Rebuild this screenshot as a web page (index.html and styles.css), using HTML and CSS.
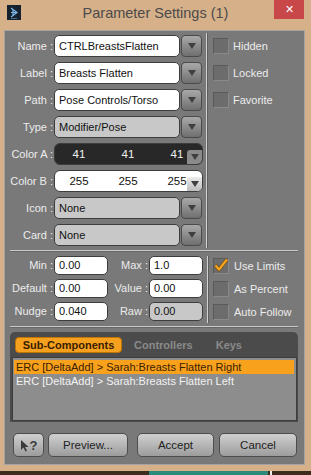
FILE: index.html
```html
<!DOCTYPE html>
<html>
<head>
<meta charset="utf-8">
<link rel="stylesheet" href="styles.css">
</head>
<body>
<div class="titlebar">
  <svg class="appicon" width="14" height="15" viewBox="0 0 14 15">
    <rect width="14" height="15" fill="#16212e"/>
    <path d="M4 3 L10 7.5 L4 12 M4 7.5 L10 7.5 M6 5 L6 10" stroke="#7fb8e8" stroke-width="1.2" fill="none"/>
    <rect x="4" y="13" width="6" height="1" fill="#4a6a8a"/>
  </svg>
  <div class="title">Parameter Settings (1)</div>
  <div class="close">✕</div>
</div>

<div class="dialog">
  <div class="top">
    <div class="form">
      <div class="row"><span class="lbl">Name :</span><div class="field">CTRLBreastsFlatten</div><div class="dd"><i></i></div></div>
      <div class="row"><span class="lbl">Label :</span><div class="field">Breasts Flatten</div><div class="dd"><i></i></div></div>
      <div class="row"><span class="lbl">Path :</span><div class="field">Pose Controls/Torso</div><div class="dd"><i></i></div></div>
      <div class="row"><span class="lbl">Type :</span><div class="field dis">Modifier/Pose</div><div class="dd"><i></i></div></div>
      <div class="row"><span class="lbl">Color A :</span><div class="color dark"><span>41</span><span>41</span><span>41</span><div class="cdd"><i></i></div></div></div>
      <div class="row"><span class="lbl">Color B :</span><div class="color light"><span>255</span><span>255</span><span>255</span><div class="cdd"><i></i></div></div></div>
      <div class="row"><span class="lbl">Icon :</span><div class="field dis">None</div><div class="dd"><i></i></div></div>
      <div class="row"><span class="lbl">Card :</span><div class="field dis">None</div><div class="dd"><i></i></div></div>
    </div>
    <div class="vsep"></div>
    <div class="checks">
      <div class="crow"><span class="cb"></span>Hidden</div>
      <div class="crow"><span class="cb"></span>Locked</div>
      <div class="crow"><span class="cb"></span>Favorite</div>
    </div>
  </div>
  <div class="hsep"></div>
  <div class="limits">
    <div class="lform">
      <div class="lrow"><span class="l1">Min :</span><div class="nf">0.00</div><span class="l2">Max :</span><div class="nf">1.0</div></div>
      <div class="lrow"><span class="l1">Default :</span><div class="nf">0.00</div><span class="l2">Value :</span><div class="nf">0.00</div></div>
      <div class="lrow"><span class="l1">Nudge :</span><div class="nf">0.040</div><span class="l2">Raw :</span><div class="nf dis">0.00</div></div>
    </div>
    <div class="vsep short"></div>
    <div class="lchecks">
      <div class="lcrow"><span class="cb checked"><svg width="16" height="16" viewBox="0 0 16 16"><path d="M2.5 8.5 L6 12.5 L14 2.5" stroke="#7a4a00" stroke-width="3.6" fill="none" stroke-linejoin="round"/><path d="M2.5 8.5 L6 12.5 L14 2.5" stroke="#f5a623" stroke-width="2.2" fill="none" stroke-linejoin="round"/></svg></span>Use Limits</div>
      <div class="lcrow"><span class="cb"></span>As Percent</div>
      <div class="lcrow"><span class="cb"></span>Auto Follow</div>
    </div>
  </div>
  <div class="hsep"></div>
  <div class="tabbox">
    <div class="tabs">
      <span class="tab active">Sub-Components</span>
      <span class="tab">Controllers</span>
      <span class="tab keys">Keys</span>
    </div>
    <div class="list">
      <div class="item sel">ERC [DeltaAdd] &gt; Sarah:Breasts Flatten Right</div>
      <div class="item">ERC [DeltaAdd] &gt; Sarah:Breasts Flatten Left</div>
    </div>
  </div>
  <div class="buttons">
    <div class="btn help"><svg width="10" height="13" viewBox="0 0 10 13"><path d="M1 1 L1 11 L3.5 8.5 L5.5 12.5 L7 11.8 L5 8 L8.5 8 Z" fill="#3a3a3a"/></svg><span>?</span></div>
    <div class="btn preview">Preview...</div>
    <div class="btn accept">Accept</div>
    <div class="btn cancel">Cancel</div>
  </div>
</div>
<div class="taskbar"><span class="teal"></span><span class="white"></span></div>
</body>
</html>
```

FILE: styles.css
```css
html, body {
  margin: 0;
  padding: 0;
}
body {
  width: 311px;
  height: 475px;
  overflow: hidden;
  background: #d6b089;
  font-family: "Liberation Sans", Arial, sans-serif;
  font-size: 11px;
  color: #111;
}
.titlebar {
  height: 30px;
  display: flex;
  align-items: flex-start;
  position: relative;
}
.appicon {
  margin: 5px 0 0 7px;
}
.title {
  position: absolute;
  left: 0;
  right: 0;
  top: 5px;
  text-align: center;
  font-size: 14.5px;
  color: #4b4b4b;
}
.close {
  position: absolute;
  left: 274px;
  top: 0;
  width: 30px;
  height: 19px;
  background: #c8484a;
  color: #fff;
  font-size: 11px;
  text-align: center;
  line-height: 19px;
}
.dialog {
  margin-left: 4px;
  width: 299px;
  height: 433px;
  background: #797979;
  border: 1px solid #a3a3a3;
  display: flex;
  flex-direction: column;
}
.top {
  display: flex;
  height: 219px;
  box-sizing: border-box;
  padding-top: 4px;
}
.form {
  display: flex;
  flex-direction: column;
  gap: 5px;
  width: 201px;
}
.row {
  display: flex;
  height: 22px;
  align-items: stretch;
}
.lbl {
  width: 48px;
  text-align: right;
  color: #ececec;
  line-height: 22px;
  white-space: nowrap;
  margin-right: 1px;
}
.field {
  background: #fff;
  border: 1px solid #3d3d3d;
  border-radius: 5px;
  padding-left: 4px;
  line-height: 20px;
  box-sizing: border-box;
  width: 126px;
  white-space: nowrap;
  overflow: hidden;
}
.field.dis, .nf.dis {
  background: #c8c8c8;
}
.dd {
  width: 21px;
  margin-left: 1px;
  box-sizing: border-box;
  border: 1px solid #4a4a4a;
  border-radius: 4px;
  background: linear-gradient(#a9a9a9, #6f6f6f);
  display: flex;
  align-items: center;
  justify-content: center;
}
.dd i, .cdd i {
  display: block;
  width: 0;
  height: 0;
  border-left: 4px solid transparent;
  border-right: 4px solid transparent;
  border-top: 6px solid #3f3f3f;
}
.color {
  position: relative;
  width: 149px;
  box-sizing: border-box;
  border: 1px solid #3d3d3d;
  border-radius: 6px;
  display: flex;
  align-items: center;
  line-height: 20px;
  font-size: 11.5px;
}
.color span {
  width: 50px;
  text-align: center;
  margin-left: -1px;
}
.color.dark {
  background: #282828;
  color: #f0f0f0;
}
.color.light {
  background: #fff;
  color: #111;
}
.cdd {
  position: absolute;
  right: 0;
  bottom: 0;
  width: 15px;
  height: 14px;
  display: flex;
  align-items: center;
  justify-content: center;
  border-radius: 3px 0 5px 0;
}
.dark .cdd {
  background: #8a8a8a;
}
.light .cdd {
  background: linear-gradient(#ececec, #bcbcbc);
}
.vsep {
  width: 1px;
  background: #d2d2d2;
  border-right: 1px solid #5e5e5e;
  margin: -2px 0 2px 0;
}
.checks {
  display: flex;
  flex-direction: column;
  gap: 5px;
  padding-left: 5px;
}
.crow, .lcrow {
  display: flex;
  align-items: center;
  height: 22px;
  color: #ececec;
  white-space: nowrap;
}
.cb {
  width: 16px;
  height: 16px;
  box-sizing: border-box;
  background: #6c6c6c;
  border: 1px solid #5a5a5a;
  border-right-color: #8a8a8a;
  border-bottom-color: #8a8a8a;
  margin-right: 4px;
  display: inline-block;
  position: relative;
}
.cb.checked svg {
  position: absolute;
  left: -1px;
  top: -2px;
}
.hsep {
  height: 1px;
  background: #c9c9c9;
  border-bottom: 1px solid #666;
  margin: 0 6px 0 5px;
}
.limits {
  display: flex;
  height: 74px;
  box-sizing: border-box;
  padding-top: 4px;
}
.lform {
  display: flex;
  flex-direction: column;
  gap: 4px;
  width: 202px;
}
.lrow {
  display: flex;
  height: 19px;
}
.l1 {
  width: 48px;
  text-align: right;
  color: #ececec;
  margin-right: 1px;
  line-height: 19px;
  white-space: nowrap;
}
.l2 {
  width: 40px;
  text-align: right;
  color: #ececec;
  margin-right: 1px;
  line-height: 19px;
  white-space: nowrap;
}
.nf {
  width: 54px;
  box-sizing: border-box;
  background: #fff;
  border: 1px solid #3d3d3d;
  border-radius: 5px;
  padding-left: 4px;
  line-height: 17px;
}
.vsep.short {
  margin: 0 0 3px 0;
}
.lchecks {
  display: flex;
  flex-direction: column;
  gap: 4px;
  padding-left: 4px;
}
.lcrow {
  height: 19px;
}
.lcrow .cb {
  margin-right: 5px;
}
.tabbox {
  margin: 4px 6px 0 5px;
  background: #4b4b4b;
  border-radius: 5px 5px 0 0;
  display: flex;
  flex-direction: column;
}
.tabs {
  height: 25px;
  display: flex;
  align-items: center;
  padding-left: 5px;
  gap: 12px;
}
.tab {
  font-weight: bold;
  color: #8a8a8a;
  font-size: 11px;
}
.tab.active {
  background: #f5a11f;
  color: #3a1c00;
  border: 1px solid #c27400;
  border-radius: 4px;
  padding: 1px 5px;
  width: 95px;
  text-align: center;
}
.tab.keys {
  margin-left: 11px;
}
.list {
  margin: 0 1px 1px 2px;
  height: 64px;
  background: #8d8d8d;
  border: 1px solid #3d3d3d;
  padding: 2px 2px 0 1px;
  box-sizing: border-box;
}
.item {
  height: 14px;
  line-height: 14px;
  padding-left: 2px;
  color: #f2f2f2;
  white-space: nowrap;
}
.item.sel {
  background: #f8a11c;
  color: #3a2000;
}
.buttons {
  display: flex;
  margin-top: 11px;
  padding-left: 8px;
  height: 24px;
}
.btn {
  box-sizing: border-box;
  height: 24px;
  border: 1px solid #4d4d4d;
  border-radius: 5px;
  background: linear-gradient(#d0d0d0, #9c9c9c);
  color: #222;
  display: flex;
  align-items: center;
  justify-content: center;
  font-size: 11.5px;
}
.help {
  width: 31px;
}
.help span {
  font-weight: bold;
  font-size: 13px;
  color: #3a3a3a;
}
.preview {
  width: 80px;
  margin-left: 4px;
}
.accept {
  width: 77px;
  margin-left: 9px;
}
.cancel {
  width: 78px;
  margin-left: 5px;
}
.taskbar {
  margin-top: 6px;
  height: 4px;
  background: #3b2c1e;
  display: flex;
}
.teal {
  margin-left: 149px;
  width: 119px;
  background: #2b8a7a;
}
.white {
  margin-left: 2px;
  width: 2px;
  background: #eee;
}
```
